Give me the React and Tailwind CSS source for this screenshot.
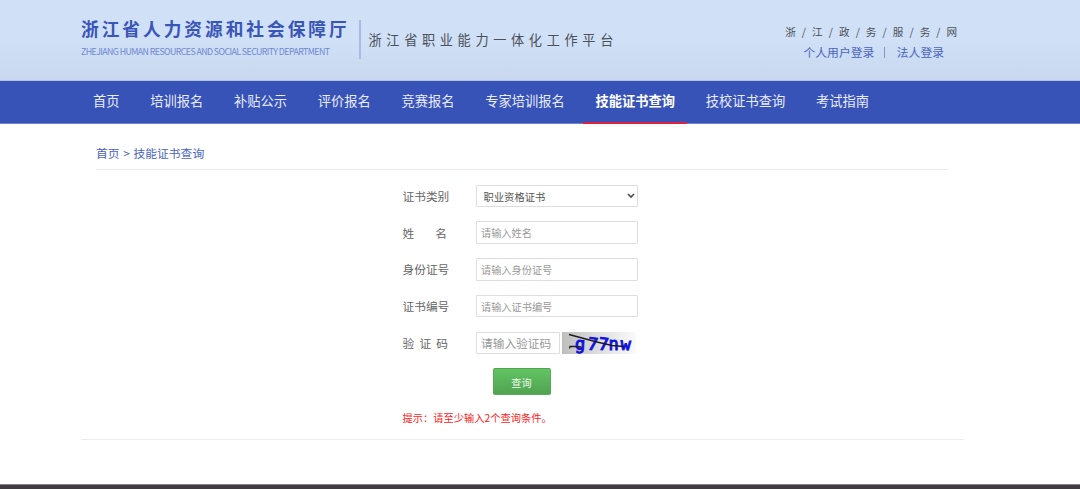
import React from "react";

const NAV = [
  "首页",
  "培训报名",
  "补贴公示",
  "评价报名",
  "竞赛报名",
  "专家培训报名",
  "技能证书查询",
  "技校证书查询",
  "考试指南",
];
const ACTIVE = "技能证书查询";

function Header() {
  return (
    <header className="flex h-[81px] items-start border-b border-[#b3c4e2] bg-linear-to-b from-[#cfe0f7] from-50% to-[#c9d8ee] pl-[81px] pr-[122px]">
      <div className="w-[278px] pt-[15px]">
        <h1 className="whitespace-nowrap text-[17.7px] leading-[26px] font-bold tracking-[2.98px] text-[#3a55b8]">
          浙江省人力资源和社会保障厅
        </h1>
        <p className="mt-[4px] whitespace-nowrap text-[8.8px] leading-[13px] tracking-[-0.58px] text-[#7088d0]">
          ZHEJIANG HUMAN RESOURCES AND SOCIAL SECURITY DEPARTMENT
        </p>
      </div>
      <div className="mt-[20px] h-[39px] w-[1.5px] bg-[#a9bbe4]" />
      <p className="mt-[30px] ml-[8px] whitespace-nowrap text-[13.2px] leading-[20px] tracking-[4.63px] text-[#4c5058]">
        浙江省职业能力一体化工作平台
      </p>
      <div className="ml-auto pt-[24px]">
        <p className="-mr-px whitespace-nowrap text-right text-[10.6px] leading-[16px] tracking-[1.85px] text-[#4c5058]">
          浙 / 江 / 政 / 务 / 服 / 务 / 网
        </p>
        <div className="mt-[3px] flex items-center justify-end whitespace-nowrap pr-[14px] text-[11.8px] leading-[18px] text-[#4a63bf]">
          <a>个人用户登录</a>
          <span className="mr-[11.5px] ml-[10px] h-[11px] w-px bg-[#8195d6]" />
          <a>法人登录</a>
        </div>
      </div>
    </header>
  );
}

function Nav() {
  return (
    <nav className="flex h-[43px] border-b border-[#6f84cf] bg-[#3853b8] pl-[81px] text-[13.25px] text-[#e9edfb]">
      {NAV.map((item) => (
        <a
          key={item}
          className={
            item === ACTIVE
              ? "-mb-px flex h-[43px] items-center border-b-2 border-[#dd2040] px-[12px] mx-[3.37px] pb-px font-bold text-white whitespace-nowrap"
              : "flex h-[42px] items-center px-[15.37px] pb-[2px] whitespace-nowrap first:pl-[12px]"
          }
        >
          {item}
        </a>
      ))}
    </nav>
  );
}

function Row({ label, children }) {
  return (
    <div className="flex h-[22.5px] items-center">
      <label className="w-[73px] shrink-0 whitespace-pre text-[11.7px] leading-[18px] text-[#666]">
        {label}
      </label>
      {children}
    </div>
  );
}

const FIELD =
  "h-[22.5px] rounded-[1px] border-[1.5px] border-[#dedede] bg-white outline-none placeholder:text-[#999]";

function Field({ placeholder }) {
  return (
    <input
      className={FIELD + " w-[162px] px-[4.5px] text-[10.2px]"}
      placeholder={placeholder}
    />
  );
}

function Captcha() {
  return (
    <svg width="74" height="22" viewBox="0 0 74 22" className="ml-[2px]">
      <defs>
        <linearGradient id="noise">
          <stop offset="0" stopColor="#bebebe" />
          <stop offset="0.5" stopColor="#dedede" />
          <stop offset="1" stopColor="#fafafa" />
        </linearGradient>
      </defs>
      <rect width="74" height="22" fill="url(#noise)" />
      <g
        fill="#1212e0"
        stroke="#1212e0"
        strokeWidth="1"
        fontFamily="DejaVu Sans Mono, monospace"
        fontSize="17"
      >
        <text x="13" y="17.5" transform="rotate(3 18 14)">g</text>
        <text x="25.5" y="18" transform="rotate(8 30 14)">7</text>
        <text x="36.5" y="18" transform="rotate(6 41 14)">7</text>
        <text x="46.5" y="18">n</text>
        <text x="58.5" y="18" transform="rotate(3 63 14)">w</text>
      </g>
      <path
        d="M7 2.5 L35 10 L50 13.5 L62 14.5 M7.5 16.5 L8 14.5 H13 L19 15"
        fill="none"
        stroke="#1c1c26"
        strokeWidth="1.3"
      />
    </svg>
  );
}

export default function App() {
  return (
    <div className="flex h-[489px] w-[1080px] flex-col overflow-hidden bg-white font-['Noto_Sans_CJK_SC',sans-serif]">
      <Header />
      <Nav />
      <main className="flex-1">
        <div className="mr-[132px] ml-[96px] h-[46px] border-b-[1.5px] border-[#ebebeb] pt-[20px] text-[11.8px] leading-[18px] text-[#4a63bf] [word-spacing:1px]">
          首页 &gt; 技能证书查询
        </div>
        <form className="flex flex-col gap-[14.3px] pt-[14.5px] pl-[402.5px]">
          <Row label="证书类别">
            <div className="grid items-center">
              <select
                className={
                  FIELD +
                  " col-start-1 row-start-1 w-[162px] appearance-none pt-[2px] pl-[7px] text-[10.3px] text-[#555]"
                }
              >
                <option>职业资格证书</option>
              </select>
              <svg
                className="pointer-events-none col-start-1 row-start-1 mr-[3px] justify-self-end"
                width="8"
                height="6"
                viewBox="0 0 8 6"
              >
                <path d="M1 1 L4 4 L7 1" fill="none" stroke="#4a4a4a" strokeWidth="1.6" />
              </svg>
            </div>
          </Row>
          <Row
            label={
              <span className="flex w-[44.5px] justify-between">
                <span>姓</span>
                <span>名</span>
              </span>
            }
          >
            <Field placeholder="请输入姓名" />
          </Row>
          <Row label="身份证号">
            <Field placeholder="请输入身份证号" />
          </Row>
          <Row label="证书编号">
            <Field placeholder="请输入证书编号" />
          </Row>
          <Row
            label={
              <span className="flex w-[45.5px] justify-between">
                <span>验</span>
                <span>证</span>
                <span>码</span>
              </span>
            }
          >
            <input
              className={FIELD + " w-[84px] px-[4.5px] text-[11.7px]"}
              placeholder="请输入验证码"
            />
            <Captcha />
          </Row>
          <button
            type="button"
            className="ml-[90px] h-[26.5px] w-[58px] rounded-[2px] border border-[#51a351]/60 bg-linear-to-b from-[#62c462] to-[#51a351] pt-[3px] text-[10.2px] leading-none text-[#eef9ee]"
          >
            查询
          </button>
          <p className="text-[10.25px] leading-[18px] text-[#ff1a1a]">
            提示：请至少输入2个查询条件。
          </p>
        </form>
        <div className="mt-[11.5px] mr-[116px] ml-[81px] border-b-[1.5px] border-[#ededed]" />
      </main>
      <footer className="h-[5px] border-t border-[#858585] bg-[#3e3c3e]" />
    </div>
  );
}
